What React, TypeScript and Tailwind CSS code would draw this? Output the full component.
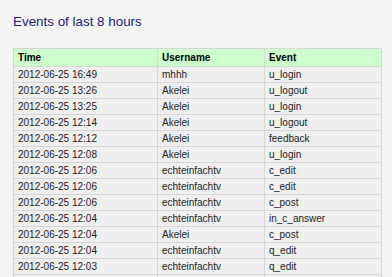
const rows = [
  ["2012-06-25 16:49", "mhhh", "u_login"],
  ["2012-06-25 13:26", "Akelei", "u_logout"],
  ["2012-06-25 13:25", "Akelei", "u_login"],
  ["2012-06-25 12:14", "Akelei", "u_logout"],
  ["2012-06-25 12:12", "Akelei", "feedback"],
  ["2012-06-25 12:08", "Akelei", "u_login"],
  ["2012-06-25 12:06", "echteinfachtv", "c_edit"],
  ["2012-06-25 12:06", "echteinfachtv", "c_edit"],
  ["2012-06-25 12:06", "echteinfachtv", "c_post"],
  ["2012-06-25 12:04", "echteinfachtv", "in_c_answer"],
  ["2012-06-25 12:04", "Akelei", "c_post"],
  ["2012-06-25 12:04", "echteinfachtv", "q_edit"],
  ["2012-06-25 12:03", "echteinfachtv", "q_edit"],
  ["", "", ""],
];

export default function App() {
  return (
    <div className="h-[277px] overflow-hidden bg-[#f4f4f4] px-[13px] pt-[13px] font-['Liberation_Sans',Arial,sans-serif]">
      <h1 className="text-[13.4px] leading-[18px] text-[#1c1c80]">Events of last 8 hours</h1>
      <table className="mt-[17px] w-[368px] table-fixed border-collapse text-[10px]">
        <colgroup>
          <col className="w-[144px]" />
          <col className="w-[107px]" />
          <col className="w-[117px]" />
        </colgroup>
        <thead>
          <tr className="h-[18px] bg-[#ccffcc] text-left font-bold text-black">
            <th className="border border-[#d6d6d6] px-[4px] py-0">Time</th>
            <th className="border border-[#d6d6d6] px-[4px] py-0">Username</th>
            <th className="border border-[#d6d6d6] px-[4px] py-0">Event</th>
          </tr>
        </thead>
        <tbody>
          {rows.map((r, i) => (
            <tr key={i} className="h-[16px] bg-[#efefef] text-[#1e1e1e]">
              <td className="border border-[#d6d6d6] px-[4px] py-0">{r[0]}</td>
              <td className="border border-[#d6d6d6] px-[4px] py-0">{r[1]}</td>
              <td className="border border-[#d6d6d6] px-[4px] py-0">{r[2]}</td>
            </tr>
          ))}
        </tbody>
      </table>
    </div>
  );
}
